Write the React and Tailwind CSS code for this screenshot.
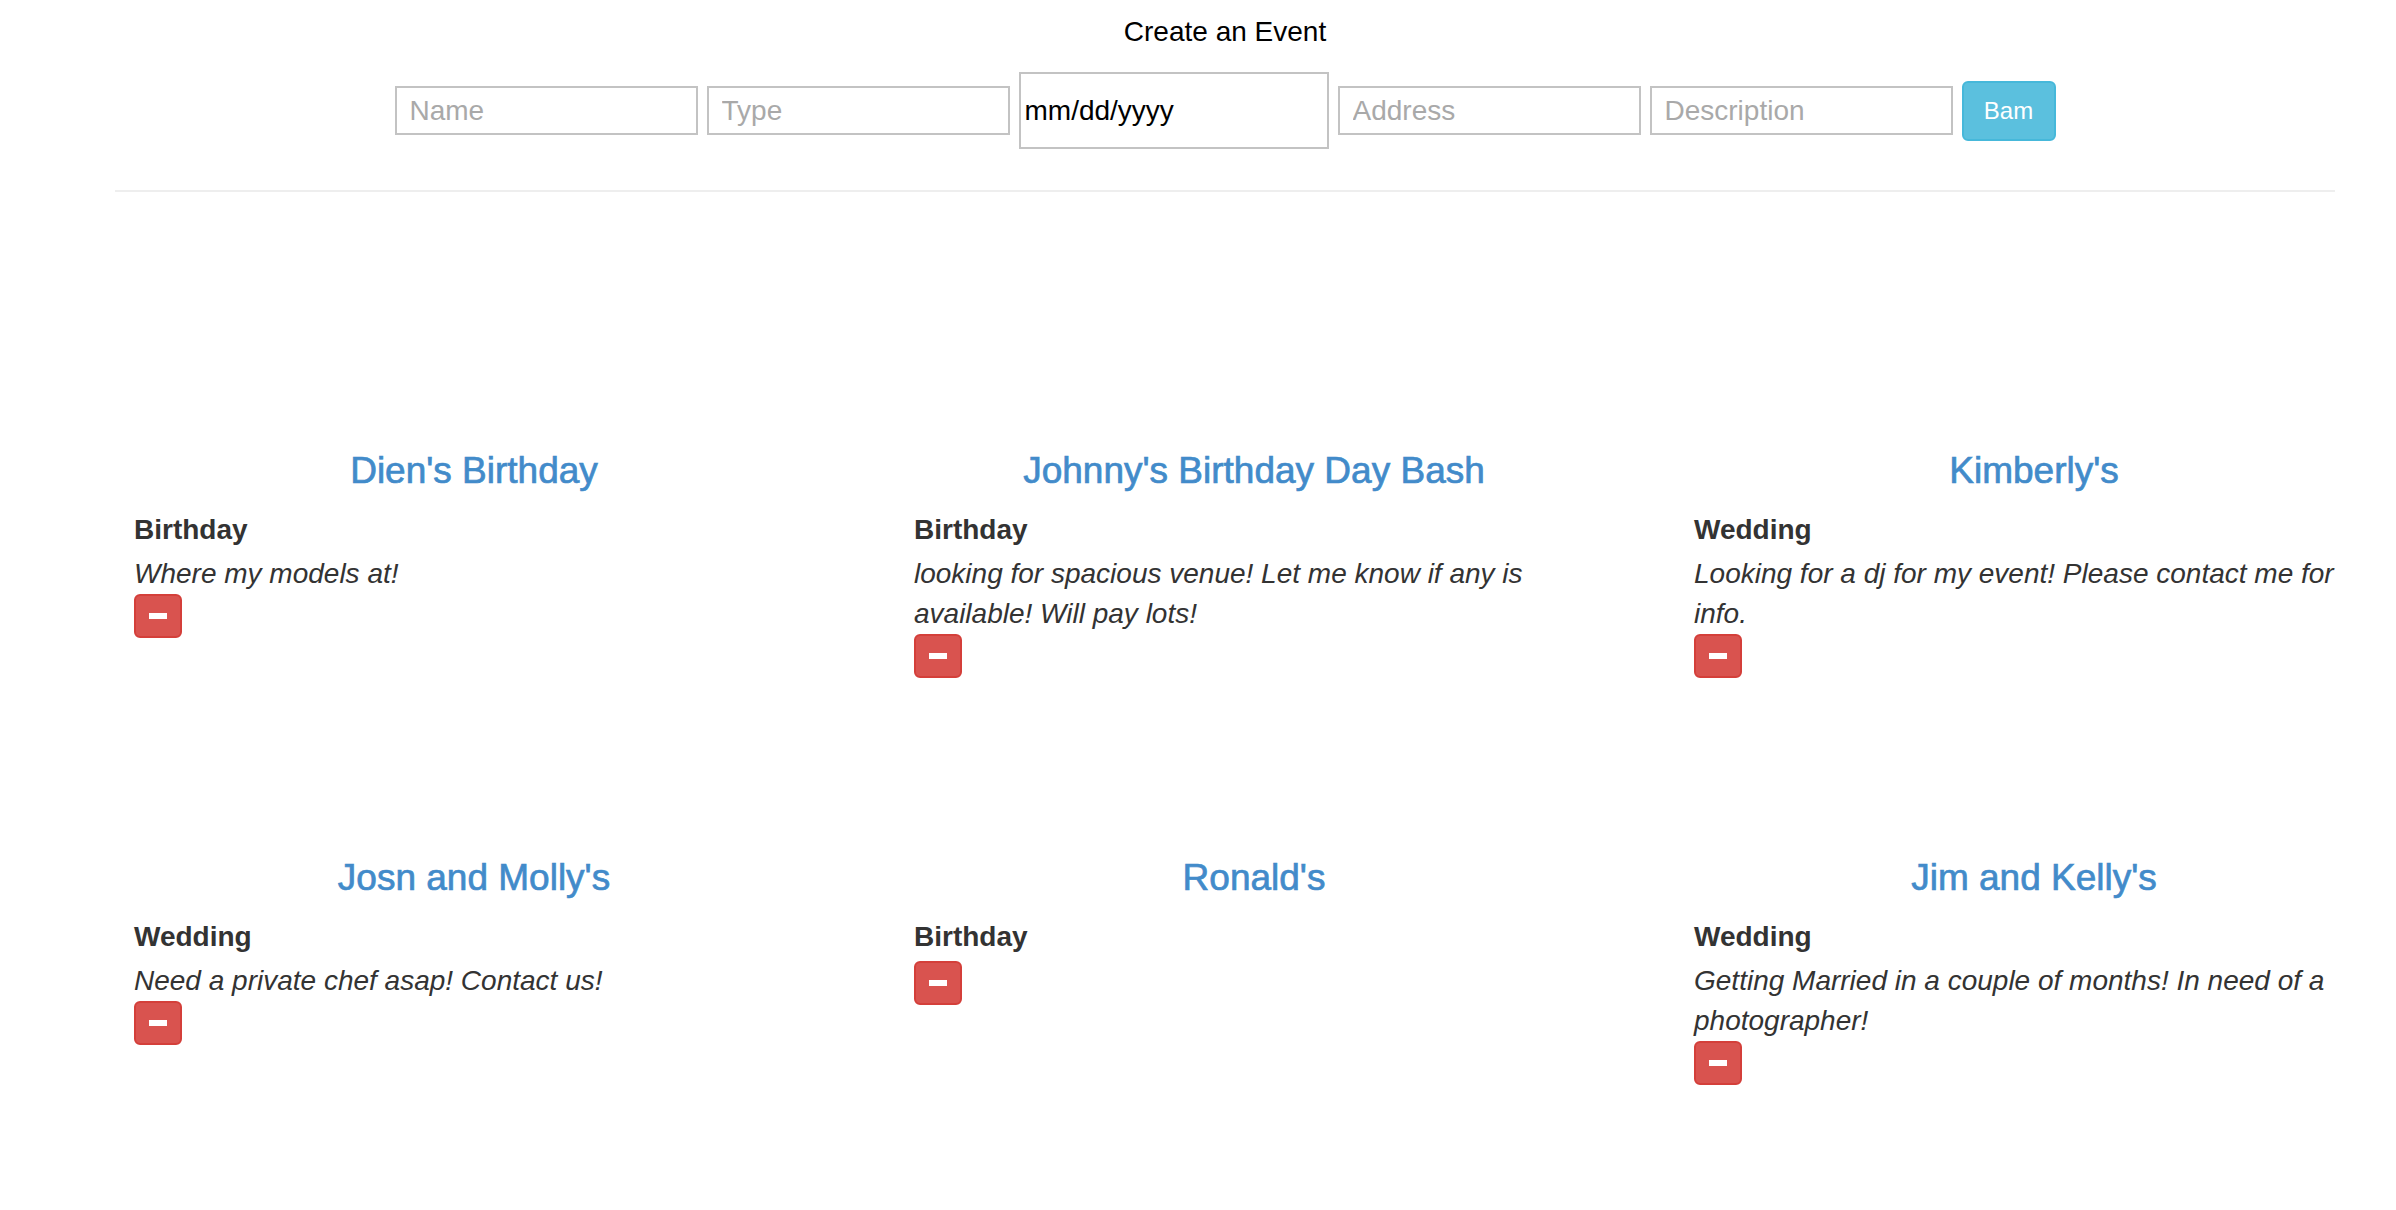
import React from 'react';

const EVENTS = [
  { id: 1, name: "Dien's Birthday", type: 'Birthday', desc: 'Where my models at!' },
  { id: 2, name: "Johnny's Birthday Day Bash", type: 'Birthday', desc: 'looking for spacious venue! Let me know if any is available! Will pay lots!' },
  { id: 3, name: "Kimberly's", type: 'Wedding', desc: 'Looking for a dj for my event! Please contact me for info.' },
  { id: 4, name: "Josn and Molly's", type: 'Wedding', desc: 'Need a private chef asap! Contact us!' },
  { id: 5, name: "Ronald's", type: 'Birthday', desc: '' },
  { id: 6, name: "Jim and Kelly's", type: 'Wedding', desc: 'Getting Married in a couple of months! In need of a photographer!' },
];

const inputCls =
  'w-[303px] h-[49px] border-2 border-[#c3c3c3] bg-white px-[13px] text-[28px] text-black placeholder:text-[#a9a9a9] outline-none';

export default function App() {
  return (
    <div className="min-h-screen w-full overflow-x-hidden bg-white font-['Liberation_Sans',Arial,sans-serif] text-[#333]">
      {/* Create form */}
      <div className="ml-[115px] w-[2220px] pt-[12px]">
        <div className="text-center text-[28px] leading-[40px] text-black">Create an Event</div>
        <div className="mt-[20px] flex items-center justify-center gap-[9px]">
          <input className={inputCls} placeholder="Name" />
          <input className={inputCls} placeholder="Type" />
          <input
            className="w-[310px] h-[77px] border-2 border-[#c3c3c3] bg-white px-[4px] text-[28px] text-black outline-none"
            defaultValue="mm/dd/yyyy"
            readOnly
          />
          <input className={inputCls} placeholder="Address" />
          <input className={inputCls} placeholder="Description" />
          <button className="h-[60px] w-[94px] rounded-[6px] border-2 border-[#46b8da] bg-[#5bc0de] text-[24px] text-white">
            Bam
          </button>
        </div>
        <hr className="mt-[41px] border-0 border-t-2 border-[#eeeeee]" />
      </div>

      {/* Event cards */}
      <div className="ml-[84px] mt-[259px] grid w-[2340px] grid-cols-3 gap-y-[180px] pb-[120px]">
        {EVENTS.map((ev) => (
          <div key={ev.id} className="px-[50px]">
            <h4 className="text-center text-[37px] leading-[40px] text-[#428bca] [-webkit-text-stroke:0.7px_#428bca]">
              {ev.name}
            </h4>
            <div className="mt-[19px] text-[28px] font-bold leading-[40px]">{ev.type}</div>
            {ev.desc ? (
              <p className="mt-[4px] text-[28px] italic leading-[40px]">{ev.desc}</p>
            ) : (
              <div className="h-[4px]" />
            )}
            <button className="flex h-[44px] w-[48px] items-center justify-center rounded-[6px] border-2 border-[#d43f3a] bg-[#d9534f]">
              <span className="block h-[6px] w-[18px] bg-white" />
            </button>
          </div>
        ))}
      </div>
    </div>
  );
}
